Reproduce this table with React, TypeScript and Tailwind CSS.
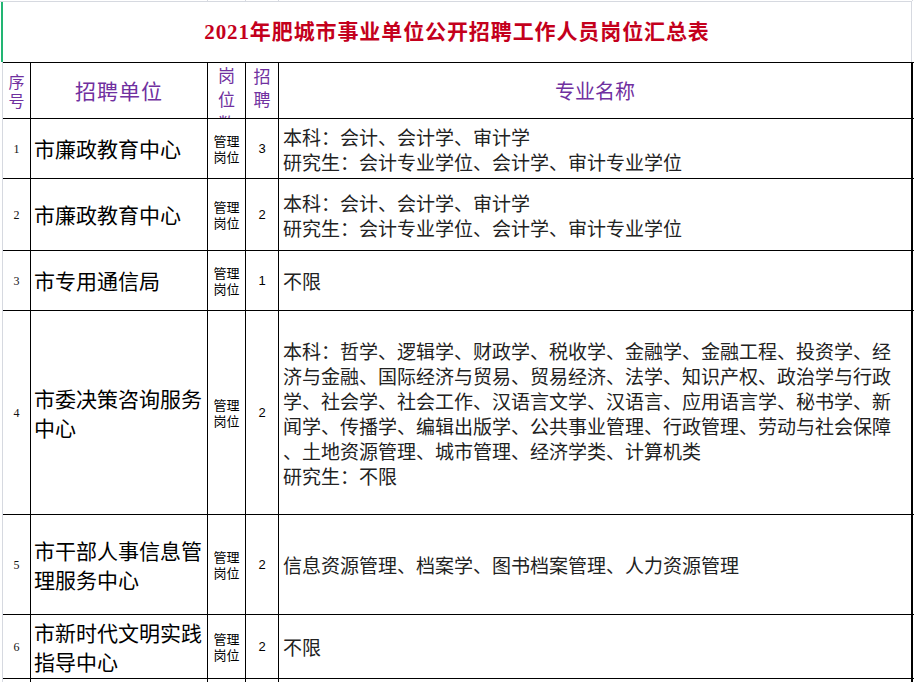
const cjk = "font-['Noto_Sans_CJK_SC',sans-serif]";

type Row = {
  no: string;
  unit: string[];
  count: string;
  major: string[];
  h: string;
};

const rows: Row[] = [
  {
    no: '1',
    unit: ['市廉政教育中心'],
    count: '3',
    major: ['本科：会计、会计学、审计学', '研究生：会计专业学位、会计学、审计专业学位'],
    h: 'h-[60px]',
  },
  {
    no: '2',
    unit: ['市廉政教育中心'],
    count: '2',
    major: ['本科：会计、会计学、审计学', '研究生：会计专业学位、会计学、审计专业学位'],
    h: 'h-[72px]',
  },
  {
    no: '3',
    unit: ['市专用通信局'],
    count: '1',
    major: ['不限'],
    h: 'h-[60px]',
  },
  {
    no: '4',
    unit: ['市委决策咨询服务', '中心'],
    count: '2',
    major: [
      '本科：哲学、逻辑学、财政学、税收学、金融学、金融工程、投资学、经',
      '济与金融、国际经济与贸易、贸易经济、法学、知识产权、政治学与行政',
      '学、社会学、社会工作、汉语言文学、汉语言、应用语言学、秘书学、新',
      '闻学、传播学、编辑出版学、公共事业管理、行政管理、劳动与社会保障',
      '、土地资源管理、城市管理、经济学类、计算机类',
      '研究生：不限',
    ],
    h: 'h-[204px]',
  },
  {
    no: '5',
    unit: ['市干部人事信息管', '理服务中心'],
    count: '2',
    major: ['信息资源管理、档案学、图书档案管理、人力资源管理'],
    h: 'h-[100px]',
  },
  {
    no: '6',
    unit: ['市新时代文明实践', '指导中心'],
    count: '2',
    major: ['不限'],
    h: 'h-[64px]',
  },
];

const cell = 'border-r border-black shrink-0';

function DataRow({ row }: { row: Row }) {
  return (
    <div className={`flex ${row.h} border-b border-black`}>
      <div className={`${cell} w-[28px] flex items-center justify-center font-['Liberation_Serif',serif] text-[12px] text-[#111]`}>
        {row.no}
      </div>
      <div className={`${cell} w-[177px] flex flex-col justify-center pl-[3px] ${cjk} text-[21px] leading-[29px] text-black whitespace-nowrap`}>
        {row.unit.map((u) => (
          <div key={u}>{u}</div>
        ))}
      </div>
      <div className={`${cell} w-[38px] flex flex-col items-center justify-center ${cjk} text-[13px] leading-[16px] text-black`}>
        <div>管理</div>
        <div>岗位</div>
      </div>
      <div className={`${cell} w-[33px] flex items-center justify-center font-['Liberation_Sans',sans-serif] text-[13px] text-black`}>
        {row.count}
      </div>
      <div className={`shrink-0 w-[634px] border-r-2 border-black flex flex-col justify-center pl-[4px] ${cjk} text-[19px] leading-[25px] text-[#222] whitespace-nowrap`}>
        {row.major.map((m, i) => (
          <div key={i}>{m}</div>
        ))}
      </div>
    </div>
  );
}

export default function App() {
  return (
    <div className="w-[914px] h-[682px] overflow-hidden bg-white relative">
      {/* gridline ticks from the row above */}
      <div className="flex h-px ml-[3px]">
        <div className="w-[28px] shrink-0" />
        <div className="w-[177px] shrink-0 border-r border-[#d6d9e0]" />
        <div className="w-[38px] shrink-0 border-r border-[#d6d9e0]" />
        <div className="w-[33px] shrink-0 border-r border-[#d6d9e0]" />
        <div className="w-[634px] shrink-0 border-r border-[#d6d9e0]" />
      </div>

      {/* title */}
      <div className="flex h-[61px] w-[912px] border-t border-r border-[#d6d9e0]">
        <div className="w-[3px] shrink-0 pl-px">
          <div className="h-full w-[2px] bg-[#22b573]" />
        </div>
        <div className="flex-1 flex items-center justify-center pt-px font-['Liberation_Serif','Noto_Sans_CJK_SC',serif] font-bold text-[21px] text-[#c4001c] tracking-[0.9px]">
          2021年肥城市事业单位公开招聘工作人员岗位汇总表
        </div>
      </div>

      <div className="ml-[2px] border-l border-[#d6d9e0]">
        {/* header */}
        <div className={`flex h-[57px] border-t border-b border-black ${cjk} text-[#7030a0]`}>
          <div className={`${cell} w-[28px] flex flex-col items-center justify-center text-[16px] leading-[19px]`}>
            <div>序</div>
            <div>号</div>
          </div>
          <div className={`${cell} w-[177px] flex items-center justify-center text-[21px] tracking-[1px]`}>
            招聘单位
          </div>
          <div className={`${cell} w-[38px] flex flex-col items-center overflow-hidden text-[17px] leading-[24px]`}>
            <div>岗</div>
            <div>位</div>
            <div className="h-[7px] overflow-hidden">数</div>
          </div>
          <div className={`${cell} w-[33px] flex flex-col items-center overflow-hidden pt-px text-[17px] leading-[23px]`}>
            <div>招</div>
            <div>聘</div>
          </div>
          <div className="shrink-0 w-[634px] border-r-2 border-black flex items-center justify-center text-[20px]">
            专业名称
          </div>
        </div>

        {rows.map((r) => (
          <DataRow key={r.no} row={r} />
        ))}

        {/* next row, cut off */}
        <div className="flex h-[20px]">
          <div className={`${cell} w-[28px]`} />
          <div className={`${cell} w-[177px]`} />
          <div className={`${cell} w-[38px]`} />
          <div className={`${cell} w-[33px]`} />
          <div className="shrink-0 w-[634px] border-r-2 border-black" />
        </div>
      </div>
    </div>
  );
}
